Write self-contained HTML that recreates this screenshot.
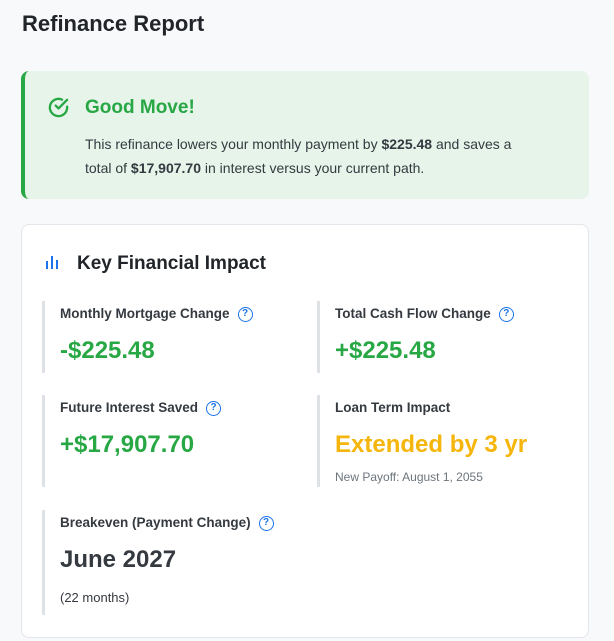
<!DOCTYPE html>
<html><head><style>
*{box-sizing:border-box;margin:0;padding:0}
body{width:614px;height:641px;background:#f8f9fa;font-family:"Liberation Sans","DejaVu Sans",sans-serif;color:#212529;position:relative;overflow:hidden}
.abs{position:absolute}
h1{position:absolute;left:22px;top:11px;font-size:22px;font-weight:600;color:#212529}
.alert{position:absolute;left:21px;top:71px;width:568px;height:128px;background:#e6f4ea;border-left:4px solid #28a745;border-radius:8px}
.alert .t{position:absolute;left:60px;top:26px;font-size:19px;font-weight:bold;color:#28a745}
.alert p{position:absolute;left:60px;top:61px;width:450px;font-size:14px;line-height:24px;color:#343a40}
.card{position:absolute;left:21px;top:224px;width:568px;height:414px;background:#fff;border:1px solid #e3e6ea;border-radius:8px}
.ct{position:absolute;left:55px;top:28px;font-size:19px;font-weight:600;color:#212529}
.item{position:absolute;border-left:3px solid #dee2e6;padding-left:15px}
.lab{font-size:13.5px;color:#343a40;font-weight:600;height:20px;line-height:20px;display:flex;align-items:center;margin-top:3px}
.q{display:inline-block;width:15px;height:15px;border:1.5px solid #1a73e8;border-radius:50%;color:#1a73e8;font-size:10px;font-weight:bold;text-align:center;line-height:12px;margin-left:8px}
.val{font-size:24px;font-weight:600;margin-top:12px;line-height:30px}
.g{color:#28a745}.y{color:#f5b50a}.d{color:#343a40}
.sub{font-size:12px;color:#6c757d;margin-top:10px}
</style></head><body>
<h1>Refinance Report</h1>
<div class="alert">
<svg class="abs" style="left:22px;top:25px" width="23" height="23" viewBox="0 0 24 24" fill="none" stroke="#28a745" stroke-width="2.4" stroke-linecap="round" stroke-linejoin="round"><path d="M21 11.1V12a9 9 0 1 1-5.3-8.2"/><path d="M21 4 12 13l-3-3"/></svg>
<div class="t">Good Move!</div>
<p>This refinance lowers your monthly payment by <b>$225.48</b> and saves a total of <b>$17,907.70</b> in interest versus your current path.</p>
</div>
<div class="card">
<svg class="abs" style="left:22px;top:29px" width="16" height="16" viewBox="0 0 16 16"><rect x="2" y="7" width="2" height="8" fill="#1a73e8"/><rect x="7" y="2" width="2" height="13" fill="#1a73e8"/><rect x="12" y="6" width="2" height="9" fill="#1a73e8"/></svg>
<div class="ct">Key Financial Impact</div>
<div class="item" style="left:20px;top:76px;width:250px;height:72px"><div class="lab">Monthly Mortgage Change<span class="q">?</span></div><div class="val g">-$225.48</div></div>
<div class="item" style="left:295px;top:76px;width:250px;height:72px"><div class="lab">Total Cash Flow Change<span class="q">?</span></div><div class="val g">+$225.48</div></div>
<div class="item" style="left:20px;top:170px;width:250px;height:92px"><div class="lab">Future Interest Saved<span class="q">?</span></div><div class="val g">+$17,907.70</div></div>
<div class="item" style="left:295px;top:170px;width:250px;height:92px"><div class="lab">Loan Term Impact</div><div class="val y">Extended by 3 yr</div><div class="sub">New Payoff: August 1, 2055</div></div>
<div class="item" style="left:20px;top:285px;width:250px;height:105px"><div class="lab">Breakeven (Payment Change)<span class="q">?</span></div><div class="val d">June 2027</div><div class="sub" style="color:#343a40;font-size:13px;margin-top:15px">(22 months)</div></div>
</div>
</body></html>
